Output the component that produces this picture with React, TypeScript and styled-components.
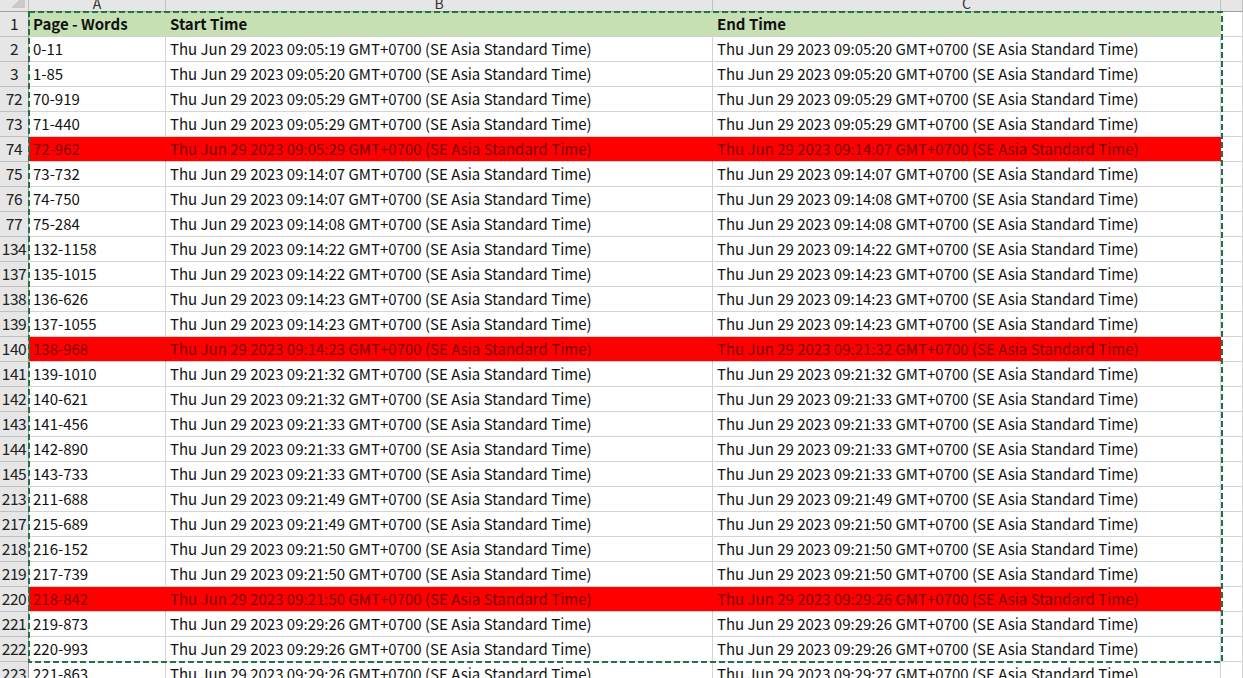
import styled, { createGlobalStyle } from 'styled-components';

const GlobalStyle = createGlobalStyle`
    html, body {
        margin: 0;
        padding: 0;
        background: #fff;
        overflow: hidden;
    }
`;

type Row = { n: number; words: string; start: string; end: string; flag?: boolean };

const tz = ' GMT+0700 (SE Asia Standard Time)';
const d = (t: string) => `Thu Jun 29 2023 ${t}${tz}`;

const rows: Row[] = [
    { n: 2, words: '0-11', start: '09:05:19', end: '09:05:20' },
    { n: 3, words: '1-85', start: '09:05:20', end: '09:05:20' },
    { n: 72, words: '70-919', start: '09:05:29', end: '09:05:29' },
    { n: 73, words: '71-440', start: '09:05:29', end: '09:05:29' },
    { n: 74, words: '72-962', start: '09:05:29', end: '09:14:07', flag: true },
    { n: 75, words: '73-732', start: '09:14:07', end: '09:14:07' },
    { n: 76, words: '74-750', start: '09:14:07', end: '09:14:08' },
    { n: 77, words: '75-284', start: '09:14:08', end: '09:14:08' },
    { n: 134, words: '132-1158', start: '09:14:22', end: '09:14:22' },
    { n: 137, words: '135-1015', start: '09:14:22', end: '09:14:23' },
    { n: 138, words: '136-626', start: '09:14:23', end: '09:14:23' },
    { n: 139, words: '137-1055', start: '09:14:23', end: '09:14:23' },
    { n: 140, words: '138-968', start: '09:14:23', end: '09:21:32', flag: true },
    { n: 141, words: '139-1010', start: '09:21:32', end: '09:21:32' },
    { n: 142, words: '140-621', start: '09:21:32', end: '09:21:33' },
    { n: 143, words: '141-456', start: '09:21:33', end: '09:21:33' },
    { n: 144, words: '142-890', start: '09:21:33', end: '09:21:33' },
    { n: 145, words: '143-733', start: '09:21:33', end: '09:21:33' },
    { n: 213, words: '211-688', start: '09:21:49', end: '09:21:49' },
    { n: 217, words: '215-689', start: '09:21:49', end: '09:21:50' },
    { n: 218, words: '216-152', start: '09:21:50', end: '09:21:50' },
    { n: 219, words: '217-739', start: '09:21:50', end: '09:21:50' },
    { n: 220, words: '218-842', start: '09:21:50', end: '09:29:26', flag: true },
    { n: 221, words: '219-873', start: '09:29:26', end: '09:29:26' },
    { n: 222, words: '220-993', start: '09:29:26', end: '09:29:26' },
    { n: 223, words: '221-863', start: '09:29:26', end: '09:29:27' },
];

function App() {
    return (
        <>
            <GlobalStyle />
            <Sheet>
                <Grid>
                    <Corner>
                        <CornerMark />
                    </Corner>
                    <ColHead>A</ColHead>
                    <ColHead>B</ColHead>
                    <ColHead>C</ColHead>
                    <ColHead />

                    <RowHead>1</RowHead>
                    <Cell $fill="#c6e0b4" $bold>Page - Words</Cell>
                    <Cell $fill="#c6e0b4" $bold>Start Time</Cell>
                    <Cell $fill="#c6e0b4" $bold>End Time</Cell>
                    <Cell />

                    {rows.map((r) => (
                        <RowGroup key={r.n} row={r} />
                    ))}
                </Grid>
                <Marquee>
                    <svg width="100%" height="100%">
                        <rect
                            x="1"
                            y="1"
                            width="calc(100% - 2px)"
                            height="calc(100% - 2px)"
                            fill="none"
                            stroke="#217346"
                            strokeWidth="2"
                            strokeDasharray="6 3"
                        />
                    </svg>
                </Marquee>
            </Sheet>
        </>
    );
}

function RowGroup({ row }: { row: Row }) {
    const fill = row.flag ? '#ff0000' : undefined;
    return (
        <>
            <RowHead>{row.n}</RowHead>
            <Cell $fill={fill}>{row.words}</Cell>
            <Cell $fill={fill}>{d(row.start)}</Cell>
            <Cell $fill={fill}>{d(row.end)}</Cell>
            <Cell />
        </>
    );
}

const Sheet = styled.div`
    position: relative;
    width: 1243px;
    height: 678px;
    overflow: hidden;
    font-family: "Noto Sans CJK JP", "Noto Sans", sans-serif;
`;

const Grid = styled.div`
    display: grid;
    grid-template-columns: 29px 137px 547px 508px 1fr;
    grid-template-rows: 12px;
    grid-auto-rows: 25px;
`;

const Corner = styled.div`
    position: relative;
    background: #e6e6e6;
    border-right: 1px solid #bfbfbf;
    border-bottom: 1px solid #9e9e9e;
    box-sizing: border-box;
    overflow: hidden;
`;

const CornerMark = styled.div`
    position: absolute;
    right: 3px;
    bottom: 3px;
    width: 0;
    height: 0;
    border-left: 14px solid transparent;
    border-bottom: 14px solid #c9c9c9;
`;

const ColHead = styled.div`
    background: #e6e6e6;
    border-right: 1px solid #bfbfbf;
    border-bottom: 1px solid #9e9e9e;
    box-sizing: border-box;
    overflow: hidden;
    display: flex;
    justify-content: center;
    align-items: flex-end;
    font-size: 14px;
    line-height: 16px;
    color: #333;
`;

const RowHead = styled.div`
    background: #e6e6e6;
    border-right: 1px solid #9e9e9e;
    border-bottom: 1px solid #bfbfbf;
    box-sizing: border-box;
    display: flex;
    align-items: center;
    justify-content: center;
    padding-bottom: 2px;
    font-size: 15.5px;
    color: #222;
    letter-spacing: -0.4px;
    white-space: nowrap;
    overflow: hidden;
`;

const Cell = styled.div<{ $fill?: string; $bold?: boolean }>`
    background: ${(p) => p.$fill || '#fff'};
    border-right: 1px solid ${(p) => p.$fill || '#d4d4d4'};
    border-bottom: 1px solid #d4d4d4;
    box-sizing: border-box;
    display: flex;
    align-items: center;
    padding: 0 4px 2px;
    font-size: 15px;
    font-weight: ${(p) => (p.$bold ? 700 : 400)};
    color: ${(p) => (p.$fill === '#ff0000' ? '#7a0000' : '#111')};
    white-space: nowrap;
    overflow: hidden;
`;

const Marquee = styled.div`
    position: absolute;
    left: 28px;
    top: 11px;
    width: 1195px;
    height: 652px;
    pointer-events: none;
`;

export default App;
